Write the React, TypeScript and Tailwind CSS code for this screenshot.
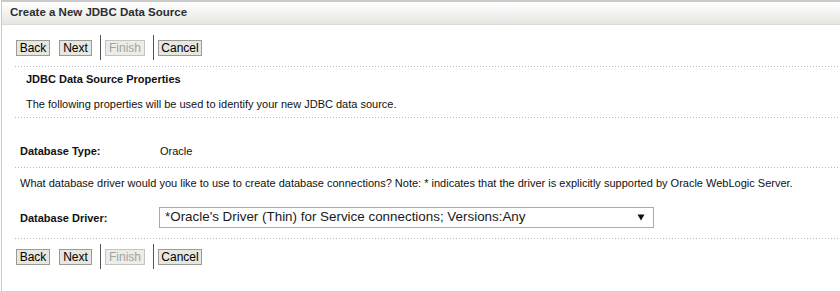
import React from "react";

const font = "font-['Liberation_Sans',Arial,sans-serif]";

function Dotted() {
  return (
    <div className="h-px w-full bg-[linear-gradient(to_right,#b8b8b8_1px,transparent_1px)] bg-[length:3px_1px]" />
  );
}

function Btn({ label, extra, disabled }: { label: string; extra: string; disabled?: boolean }) {
  return (
    <button
      disabled={disabled}
      className={
        disabled
          ? `${extra} block h-[16px] border border-[#c4c4c0] bg-[#edece7] text-center text-[12px] leading-[14px] text-[#a3a3a3]`
          : `${extra} block h-[16px] border border-[#9a9a96] bg-[#e7e6df] text-center text-[12px] leading-[14px] text-black`
      }
    >
      {label}
    </button>
  );
}

function ButtonBar() {
  return (
    <div className="flex h-[25px] items-center pl-px">
      <Btn label="Back" extra="w-[34px]" />
      <Btn label="Next" extra="ml-[9px] w-[33px]" />
      <div className="mr-[4px] ml-[8px] h-[25px] w-px bg-[#555]" />
      <Btn label="Finish" extra="w-[40px]" disabled />
      <div className="mr-[4px] ml-[8px] h-[25px] w-px bg-[#555]" />
      <Btn label="Cancel" extra="w-[44px]" />
    </div>
  );
}

export default function App() {
  return (
    <div className={`${font} ml-px min-h-[291px] w-[839px] border-l border-[#c8c8c8] bg-white text-[11px] text-[#111]`}>
      {/* title bar */}
      <div className="flex h-[25px] items-center border-t-2 border-b border-t-[#c9c9c9] border-b-[#dadad6] bg-[linear-gradient(to_bottom,#ffffff,#e6e6e2)] pl-[8px]">
        <span className="text-[11.5px] font-bold text-[#2d2d33]">Create a New JDBC Data Source</span>
      </div>

      <div className="ml-[13px]">
        <div className="h-[41px] pt-[10px]">
          <ButtonBar />
        </div>
        <Dotted />

        <div className="h-[50px] pt-[5px]">
          <div className="pl-[11px] leading-[14px] font-bold">JDBC Data Source Properties</div>
          <div className="mt-[11px] pl-[11px] leading-[14px]">
            The following properties will be used to identify your new JDBC data source.
          </div>
        </div>
        <Dotted />

        <div className="h-[49px] pt-[26px]">
          <div className="flex pl-[5px] leading-[14px]">
            <span className="w-[140px] font-bold">Database Type:</span>
            <span>Oracle</span>
          </div>
        </div>
        <Dotted />

        <div className="h-[70px] pt-[8px]">
          <div className="pl-[5px] leading-[14px]">
            What database driver would you like to use to create database connections? Note: * indicates that the driver is explicitly supported by Oracle WebLogic Server.
          </div>
          <div className="mt-[17px] flex items-center pl-[5px]">
            <span className="w-[139px] font-bold leading-[14px]">Database Driver:</span>
            <div className="flex h-[21px] w-[495px] items-center justify-between border border-[#7db5eb] pr-[8px] pl-[5px] text-[13.4px] text-[#1a1a1a]">
              <span>*Oracle's Driver (Thin) for Service connections; Versions:Any</span>
              <svg width="8" height="7" viewBox="0 0 8 7">
                <path d="M0.5 0.5 H7.5 L4 6.5 Z" fill="#111" />
              </svg>
            </div>
          </div>
        </div>
        <Dotted />

        <div className="pt-[5px] pb-[20px]">
          <ButtonBar />
        </div>
      </div>
    </div>
  );
}
